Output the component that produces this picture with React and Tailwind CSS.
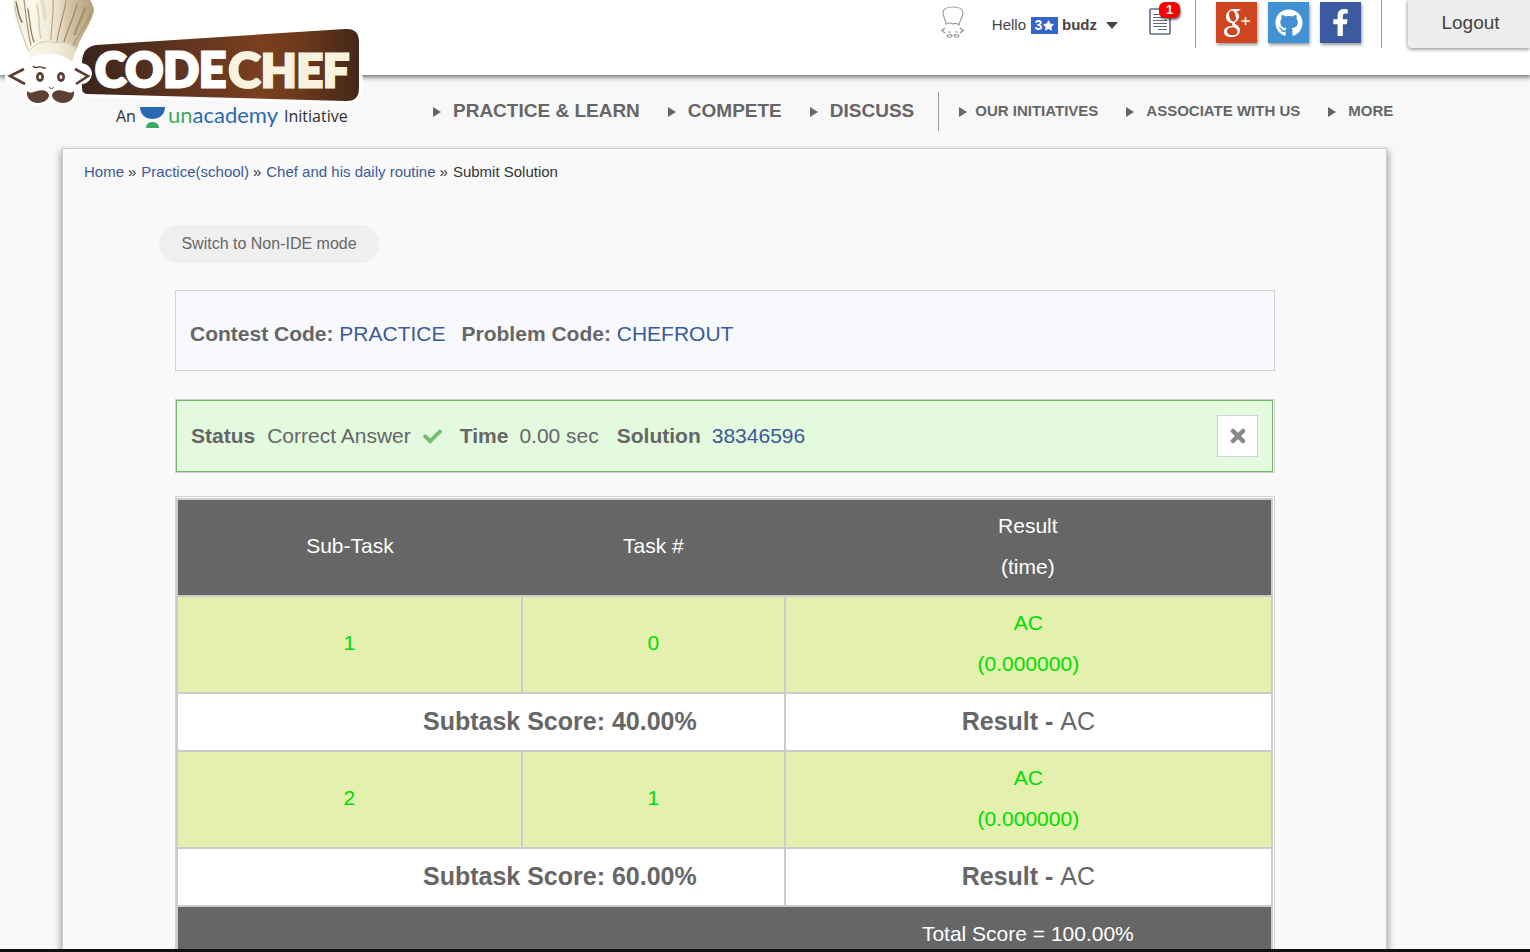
import { FaCheck, FaStar, FaFacebookF, FaGithub } from "react-icons/fa";

function Logo() {
  return (
    <svg width="370" height="135" viewBox="0 0 370 135" className="block shrink-0" role="img" aria-label="CodeChef, an unacademy initiative">
      <defs>
        <linearGradient id="board" x1="0" x2="1" y1="0" y2="0">
          <stop offset="0" stopColor="#3b241b" />
          <stop offset="0.35" stopColor="#5f3420" />
          <stop offset="0.65" stopColor="#7a401f" />
          <stop offset="0.8" stopColor="#6b381c" />
          <stop offset="1" stopColor="#44271a" />
        </linearGradient>
        <linearGradient id="hat" x1="0" x2="1" y1="0" y2="0">
          <stop offset="0" stopColor="#f3efdd" />
          <stop offset="0.25" stopColor="#f9f8ea" />
          <stop offset="0.5" stopColor="#efe6d2" />
          <stop offset="0.75" stopColor="#cdbb9a" />
          <stop offset="1" stopColor="#b39e79" />
        </linearGradient>
      </defs>
      <path d="M96 45 L345 29 Q359 28 359 42 V88 Q359 102 345 101 L88 94 Q82 94 82 88 V62 Q82 47 96 45 Z" fill="#fff" stroke="#fff" strokeWidth="7" />
      <path d="M28 58 C22 60 18 66 8 72 C4 76 6 82 12 84 C18 88 22 86 25 90 C23 100 32 106 42 104 C48 103 50 101 52 101 C58 105 70 105 76 98 C78 94 78 90 80 88 C88 86 94 80 92 72 C90 64 80 62 76 58 C60 50 40 50 28 58 Z" fill="#fff" stroke="#fff" strokeWidth="2" />
      <path d="M96 45 L345 29 Q359 28 359 42 V88 Q359 102 345 101 L88 94 Q82 94 82 88 V84 C88 84 92 78 92 73 C91 66 86 64 82 63 Q82 47 96 45 Z" fill="url(#board)" />
      <path d="M13 0 C12 12 17 24 23 37 L29 51 L30 58 C42 51 60 52 72 61 L77 48 C82 34 90 26 94 11 C94 7 92 3 90 0 Z" fill="url(#hat)" />
      <path d="M29 50 C35 42 46 40 55 43 C64 41 73 44 77 49 L72 61 C60 52 42 51 30 58 Z" fill="#f6f3e3" fillOpacity="0.6" />
      <g fill="none" strokeLinecap="round">
        <path d="M15 6 C17 22 23 36 28 50" stroke="#cbbd9f" strokeWidth="1" />
        <path d="M16 2 C18 8 18 16 22 22" stroke="#8d7a5d" strokeWidth="1.6" />
        <path d="M24 0 C26 14 27 30 31 45" stroke="#a99a7e" strokeWidth="1.3" />
        <path d="M28 9 C30 20 30 32 34 42" stroke="#8d7a5d" strokeWidth="1.3" />
        <path d="M37 5 C40 16 38 28 41 38" stroke="#d9ccb3" strokeWidth="1.6" />
        <path d="M42 0 C44 8 45 12 45 18" stroke="#e5dcc9" strokeWidth="4" />
        <path d="M53 0 C54 14 51 28 51 40" stroke="#b39e79" strokeWidth="1.1" />
        <path d="M66 1 C64 14 59 28 57 41" stroke="#a48d69" strokeWidth="1.1" />
        <path d="M77 4 C74 18 67 30 64 42" stroke="#a08660" strokeWidth="1.2" />
        <path d="M85 8 C82 18 77 26 75 34" stroke="#a89274" strokeWidth="2.4" />
        <path d="M91 12 C88 24 79 32 73 46" stroke="#a28d6c" strokeWidth="1" />
      </g>
      <path d="M29 51 C36 42 46 40 55 43 C64 41 72 44 76 50" fill="none" stroke="#d8ccb4" strokeWidth="1" />
      <g fill="none" stroke="#5c4033">
        <path d="M24 69 L10 76 L25 84" strokeWidth="2.6" />
        <path d="M75 69 L88 76 L76 84" strokeWidth="2.6" />
        <path d="M33 66 C35 69 37 67 39 67 C42 66 43 69 46 68" strokeWidth="1.4" />
        <path d="M49 87 C50 89 53 89 54 87" strokeWidth="1" />
      </g>
      <ellipse cx="40" cy="77" rx="4" ry="5" fill="#5c4033" />
      <ellipse cx="40" cy="77" rx="1.4" ry="2" fill="#fff" />
      <ellipse cx="61" cy="77" rx="4" ry="5" fill="#5c4033" />
      <ellipse cx="61" cy="77" rx="1.4" ry="2" fill="#fff" />
      <path d="M27 91 C30 94 33 92 37 91 C43 89 48 91 49 95 C49 99 44 103 38 103 C31 103 26 98 27 91 Z" fill="#5c4033" />
      <path d="M74 91 C71 94 68 92 64 91 C58 89 53 91 52 95 C52 99 57 103 63 103 C70 103 75 98 74 91 Z" fill="#5c4033" />
      <text x="95" y="87" fontFamily="Lato, sans-serif" fontWeight="900" fontSize="47" fill="#fff" stroke="#fff" strokeWidth="3">CODE</text>
      <text x="228" y="88" fontFamily="Lato, sans-serif" fontWeight="900" fontSize="50" fill="#f8f2df" stroke="#f8f2df" strokeWidth="2">C</text>
      <text x="261" y="87" fontFamily="Lato, sans-serif" fontWeight="900" fontSize="46" fill="#f8f2df" stroke="#f8f2df" strokeWidth="3">HEF</text>
      <text x="116" y="122" fontFamily="Open Sans, sans-serif" fontSize="16" fill="#2f2f2f">An</text>
      <path d="M140 107 H165 C165 115 159 119 152 119 C146 119 140 115 140 107 Z" fill="#2a68b2" />
      <path d="M146 128 C146 124 149 122 152 122 C156 122 159 124 159 128 Z" fill="#3bab64" />
      <text x="168" y="123" fontFamily="Lato, sans-serif" fontSize="22" fill="#3bab64">un<tspan fill="#2a68b2">academy</tspan></text>
      <text x="284" y="122" fontFamily="Open Sans, sans-serif" fontSize="16" fill="#2f2f2f">Initiative</text>
    </svg>
  );
}

function ChefAvatar() {
  return (
    <svg width="24" height="34" viewBox="0 0 24 34" fill="none" stroke="#999" strokeWidth="1.1" aria-hidden="true">
      <path d="M5 18 C5 14 2 11 2 7 C2 3 6 1 12 1 C18 1 22 3 22 7 C22 11 19 14 18 19 C16 17 14 17 12 18 C9 16 7 17 5 18 Z" />
      <path d="M4 22 L1 24.500 L4 27 M19 22 L22 24.500 L19 27" strokeWidth="1.500" />
      <path d="M7 26 H10 M14 26 H17" />
      <path d="M6 29 C6 32 11 32 11 29 C9 28 8 29 6 29 Z M18 29 C18 32 13 32 13 29 C15 28 16 29 18 29 Z" />
    </svg>
  );
}

function Notifications() {
  return (
    <button type="button" aria-label="Notifications" className="relative mt-2 h-7 w-[22px]">
      <svg width="22" height="28" viewBox="0 0 22 28" fill="none" aria-hidden="true">
        <rect x="1" y="1" width="20" height="25" rx="1" fill="#fff" stroke="#5d6b82" strokeWidth="1.6" />
        <path d="M4 6.5H18M4 9.5H18M4 12.5H18M4 15.5H18M4 18.5H18M9 21.5H18" stroke="#5d6b82" strokeWidth="1.2" />
      </svg>
      <span className="absolute -top-[6px] left-[10px] flex h-4 w-[21px] items-center justify-center rounded-md bg-[#f80000] text-[13px] font-bold text-white shadow-[1px_2px_2px_rgba(0,0,0,0.5)]">1</span>
    </button>
  );
}

const Arrow = () => (
  <svg width="8" height="10" viewBox="0 0 8 10" className="shrink-0" aria-hidden="true">
    <path d="M0 0 L8 5 L0 10 Z" fill="#666" />
  </svg>
);

function NavLink({ children, className }) {
  return (
    <a href="#" className={`flex items-center ${className}`}>
      <Arrow />
      {children}
    </a>
  );
}

const social = "flex h-[41px] w-[41px] items-center justify-center text-white shadow-[1px_2px_3px_rgba(0,0,0,0.4)]";

function TopBar() {
  return (
    <header className="relative z-10 flex h-[75px] items-start justify-between bg-white shadow-[0_1px_5px_1px_rgba(0,0,0,0.6)]">
      <a href="#"><Logo /></a>
      <div className="flex items-start text-[15px] text-[#444]">
        <div className="mt-[6px]"><ChefAvatar /></div>
        <button type="button" className="mt-4 ml-[27px] flex h-[18px] items-center">
          Hello
          <span className="ml-[5px] flex h-[17px] w-[27px] items-center justify-center gap-px bg-[#3366cc] text-sm font-bold text-white">
            3<FaStar size={11} />
          </span>
          <b className="ml-1">budz</b>
          <svg width="12" height="7" viewBox="0 0 12 7" className="ml-[9px]" aria-hidden="true"><path d="M0 0H12L6 7Z" fill="#444" /></svg>
        </button>
        <div className="ml-[31px] flex"><Notifications /></div>
        <div className="ml-6 flex h-12 gap-[11px] border-x border-[#999] pt-[2px] pr-5 pl-5">
          <a href="#" aria-label="Google Plus" className={`${social} bg-[#cf4520]`}>
            <svg width="28" height="30" viewBox="0 0 28 30" aria-hidden="true">
              <path fill="#fff" fillRule="evenodd" d="M9 1 H18 L15.500 3 H13 C15 4.500 16 6 16 8.500 C16 11 14.500 12.500 13 13.500 C11.500 14.700 11.500 15.500 13 16.500 C15.500 18.300 17 19.500 17 22.500 C17 26.500 13.500 29 8.500 29 C4 29 1 27 1 23.700 C1 20 4.500 18 10 18 C9 17 8.800 16 9.300 15 C5.500 15 3 12.300 3 9 C3 5 5.500 2 9 1 Z M9 2.500 C6.500 2.500 5.600 5 6.200 8 C6.800 11.500 8.300 13.500 10.300 13.500 C12.500 13.500 13.300 11.500 12.800 8.700 C12.200 5 11 2.500 9 2.500 Z M11 19.300 C6.500 19.300 4 20.600 4 23.300 C4 25.800 6.200 27.300 9.500 27.300 C12.800 27.300 14.500 26 14.500 23.700 C14.500 21.800 13.300 20.800 11 19.300 Z" />
              <path d="M22.500 9V17M18.500 13H27" fill="none" stroke="#fff" strokeWidth="1.600" />
            </svg>
          </a>
          <a href="#" aria-label="GitHub" className={`${social} bg-[#4291d2]`}><FaGithub size={28} /></a>
          <a href="#" aria-label="Facebook" className={`${social} bg-[#3c5a9f]`}><FaFacebookF size={27} /></a>
        </div>
        <button type="button" className="ml-[26px] h-12 w-[122px] rounded-bl bg-[#eee] pb-[2px] pl-[3px] text-[19px] shadow-[0_1px_4px_rgba(0,0,0,0.5)]">Logout</button>
      </div>
    </header>
  );
}

function Nav() {
  return (
    <nav className="flex h-[73px] items-center pl-[433px] font-bold whitespace-nowrap text-[#666]">
      <div className="flex h-[39px] items-center gap-7 border-r border-[#999] pr-6 text-[19px]">
        <NavLink className="gap-3">PRACTICE &amp; LEARN</NavLink>
        <NavLink className="gap-3">COMPETE</NavLink>
        <NavLink className="gap-3">DISCUSS</NavLink>
      </div>
      <div className="ml-5 flex items-center gap-7 text-[15px]">
        <NavLink className="gap-2">OUR INITIATIVES</NavLink>
        <NavLink className="gap-3">ASSOCIATE WITH US</NavLink>
        <NavLink className="gap-3">MORE</NavLink>
      </div>
    </nav>
  );
}

const subtasks = [
  { id: 1, task: 0, result: "AC", time: "(0.000000)", score: "40.00%" },
  { id: 2, task: 1, result: "AC", time: "(0.000000)", score: "60.00%" },
];

function ResultRows({ row }) {
  return (
    <>
      <tr className="h-[97px] bg-[#e4f0ad] text-[#0d0]">
        <td className="border-2 border-[#ccc] pb-[3px]">{row.id}</td>
        <td className="border-2 border-[#ccc] pb-[3px]">{row.task}</td>
        <td className="border-2 border-[#ccc] pb-[3px] leading-[41px]">{row.result}<br />{row.time}</td>
      </tr>
      <tr className="h-[58px] bg-white text-[25px]">
        <td colSpan={2} className="border-2 border-[#ccc] pl-[158px] font-bold">Subtask Score: {row.score}</td>
        <td className="border-2 border-[#ccc]"><b>Result - </b>{row.result}</td>
      </tr>
    </>
  );
}

function ResultsTable() {
  return (
    <div className="mt-[23px] border border-[#d2d2d2] bg-white pt-px pr-px">
      <table className="w-full table-fixed border-collapse border-2 border-[#ccc] text-center text-[21px] text-[#666]">
        <colgroup>
          <col className="w-[31.5%]" />
          <col className="w-[24%]" />
          <col />
        </colgroup>
        <thead className="bg-[#666] text-white">
          <tr className="h-[97px]">
            <th className="pb-[3px] font-normal">Sub-Task</th>
            <th className="pb-[3px] font-normal">Task #</th>
            <th className="pb-[3px] leading-[41px] font-normal">Result<br />(time)</th>
          </tr>
        </thead>
        <tbody>
          {subtasks.map((row) => <ResultRows key={row.id} row={row} />)}
          <tr className="h-[58px] bg-[#666] text-white">
            <td colSpan={2} />
            <td className="pb-[3px]">Total Score = 100.00%</td>
          </tr>
        </tbody>
      </table>
    </div>
  );
}

const Separator = () => <span className="mr-px">»</span>;

export default function App() {
  return (
    <div className="flex h-screen flex-col bg-[#f8f8f8] font-['Liberation_Sans',Arial,sans-serif]">
      <div className="min-h-0 flex-1 overflow-y-auto [scrollbar-width:none]">
        <TopBar />
        <Nav />
        <main className="mr-[143px] ml-[62px] border border-[#ccc] bg-[#f9f9f9] pr-[111px] pb-10 pl-[112px] shadow-[0_4px_7px_1px_rgba(0,0,0,0.4)]">
          <div className="-ml-[91px] flex h-[46px] items-center gap-1 text-[15px] text-[#333]">
            <a href="#" className="text-[#3b5998]">Home</a><Separator />
            <a href="#" className="text-[#3b5998]">Practice(school)</a><Separator />
            <a href="#" className="text-[#3b5998]">Chef and his daily routine</a><Separator />
            <span>Submit Solution</span>
          </div>
          <button type="button" className="mt-[30px] -ml-4 h-[38px] w-[220px] rounded-full bg-[#efefef] text-[16px] text-[#666]">Switch to Non-IDE mode</button>
          <section className="mt-[27px] flex h-[81px] items-center gap-4 border border-[#d2d2d8] bg-[#f8f9fc] px-[14px] pt-[6px] text-[21px] text-[#666]">
            <p><b>Contest Code:</b> <a href="#" className="text-[#3b5998]">PRACTICE</a></p>
            <p><b>Problem Code:</b> <a href="#" className="text-[#3b5998]">CHEFROUT</a></p>
          </section>
          <section className="mt-[28px] border border-[#d2d2d2] pr-px">
            <div className="flex h-[72px] items-center border border-[#70b867] bg-[#e3fadf] px-[14px] text-[21px] text-[#666]">
              <b>Status</b>
              <span className="ml-3">Correct Answer</span>
              <FaCheck size={19} className="ml-3 text-[#72bd6e]" />
              <b className="ml-[18px]">Time</b>
              <span className="ml-[11px]">0.00 sec</span>
              <b className="ml-[18px]">Solution</b>
              <a href="#" className="ml-[11px] text-[#3b5998]">38346596</a>
              <button type="button" aria-label="Close" className="ml-auto flex h-[42px] w-[41px] items-center justify-center border border-[#d2d2d8] bg-white">
                <svg width="16" height="16" viewBox="0 0 16 16" aria-hidden="true"><path d="M3 3L13 13M13 3L3 13" stroke="#888" strokeWidth="4.5" strokeLinecap="round" /></svg>
              </button>
            </div>
          </section>
          <ResultsTable />
        </main>
      </div>
      <div className="h-[3px] shrink-0 bg-[#111]" />
    </div>
  );
}
